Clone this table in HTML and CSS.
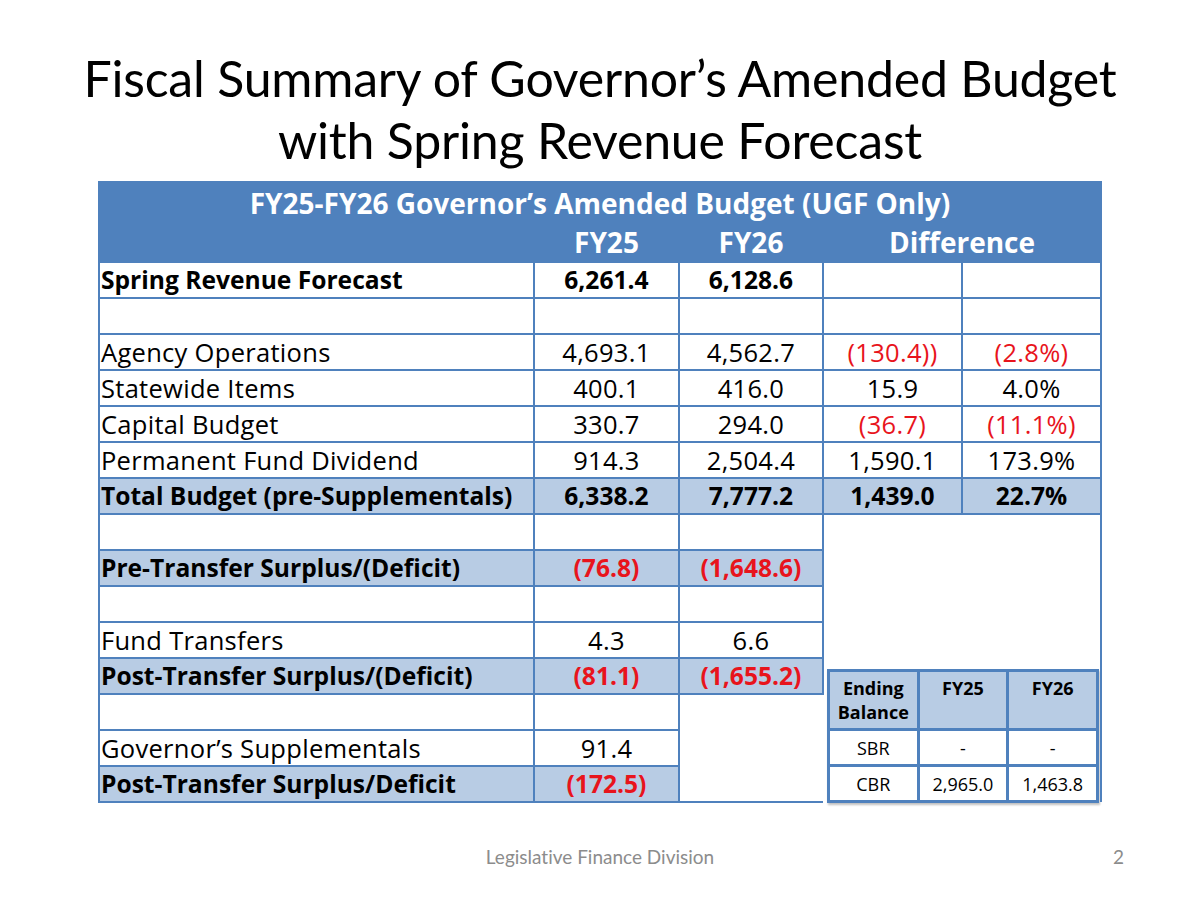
FILE: index.html
```html
<!DOCTYPE html>
<html lang="en">
<head>
<meta charset="utf-8">
<title>Fiscal Summary</title>
<link rel="stylesheet" href="styles.css">
</head>
<body>
<div class="slide">
  <h1 class="title">Fiscal Summary of Governor’s Amended Budget<br>with Spring Revenue Forecast</h1>
  <table class="budget">
    <colgroup>
      <col class="c-label"><col class="c-num"><col class="c-num2"><col class="c-diff"><col class="c-diff">
    </colgroup>
    <thead>
      <tr class="h1row"><th colspan="5">FY25-FY26 Governor’s Amended Budget (UGF Only)</th></tr>
      <tr class="h2row"><th></th><th>FY25</th><th>FY26</th><th colspan="2">Difference</th></tr>
    </thead>
    <tbody>
      <tr class="bold"><td class="lbl">Spring Revenue Forecast</td><td>6,261.4</td><td>6,128.6</td><td></td><td></td></tr>
      <tr><td></td><td></td><td></td><td></td><td></td></tr>
      <tr><td class="lbl">Agency Operations</td><td>4,693.1</td><td>4,562.7</td><td class="neg">(130.4))</td><td class="neg">(2.8%)</td></tr>
      <tr><td class="lbl">Statewide Items</td><td>400.1</td><td>416.0</td><td>15.9</td><td>4.0%</td></tr>
      <tr><td class="lbl">Capital Budget</td><td>330.7</td><td>294.0</td><td class="neg">(36.7)</td><td class="neg">(11.1%)</td></tr>
      <tr><td class="lbl">Permanent Fund Dividend</td><td>914.3</td><td>2,504.4</td><td>1,590.1</td><td>173.9%</td></tr>
      <tr class="bold hl"><td class="lbl">Total Budget (pre-Supplementals)</td><td>6,338.2</td><td>7,777.2</td><td>1,439.0</td><td>22.7%</td></tr>
      <tr>
        <td></td><td></td><td class="rb"></td>
        <td colspan="2" rowspan="8" class="merged">
          <table class="ending">
            <tr class="eh"><th>Ending<br>Balance</th><th>FY25</th><th>FY26</th></tr>
            <tr><td>SBR</td><td>-</td><td>-</td></tr>
            <tr><td>CBR</td><td>2,965.0</td><td>1,463.8</td></tr>
          </table>
        </td>
      </tr>
      <tr class="bold hl"><td class="lbl">Pre-Transfer Surplus/(Deficit)</td><td class="neg">(76.8)</td><td class="neg rb">(1,648.6)</td></tr>
      <tr><td></td><td></td><td class="rb"></td></tr>
      <tr><td class="lbl">Fund Transfers</td><td>4.3</td><td class="rb">6.6</td></tr>
      <tr class="bold hl"><td class="lbl">Post-Transfer Surplus/(Deficit)</td><td class="neg">(81.1)</td><td class="neg rb">(1,655.2)</td></tr>
      <tr><td></td><td></td><td rowspan="3" class="blank"></td></tr>
      <tr><td class="lbl">Governor’s Supplementals</td><td>91.4</td></tr>
      <tr class="bold hl"><td class="lbl">Post-Transfer Surplus/Deficit</td><td class="neg">(172.5)</td></tr>
    </tbody>
  </table>
  <footer class="footer">
    <span></span>
    <span class="src">Legislative Finance Division</span>
    <span class="page">2</span>
  </footer>
</div>
</body>
</html>
```

FILE: styles.css
```css
* { box-sizing: border-box; }
html, body { margin: 0; padding: 0; background: #fff; }
body {
  font-family: Lato, "Open Sans", sans-serif;
  color: #000;
  font-variant-ligatures: none;
}

.slide {
  width: 1200px;
  height: 900px;
  display: flex;
  flex-direction: column;
  align-items: center;
}

.title {
  margin: 47px 0 10px;
  font-weight: 400;
  font-size: 50px;
  line-height: 62px;
  text-align: center;
  color: #000;
  letter-spacing: -0.2px;
}

.budget {
  border-collapse: collapse;
  width: 1002px;
  table-layout: fixed;
  font-family: "Open Sans", Lato, sans-serif;
  font-size: 25.5px;
  letter-spacing: 0.3px;
}
.c-label { width: 435px; }
.c-num { width: 145px; }
.c-num2 { width: 144px; }
.c-diff { width: 139px; }

.budget th {
  background: #4f81bd;
  color: #fff;
  font-weight: 700;
  border: 2px solid #4f81bd;
  padding: 0;
  white-space: nowrap;
}
.h1row th { height: 40px; font-size: 28px; vertical-align: bottom; padding-bottom: 0; letter-spacing: 0; line-height: 36px; }
.h2row th { height: 40px; font-size: 28px; vertical-align: middle; letter-spacing: 0; line-height: 36px; }

.budget > tbody > tr { height: 36px; }
.budget > tbody > tr > td {
  border: 2px solid #4f81bd;
  padding: 0;
  text-align: center;
  vertical-align: middle;
  line-height: 30px;
  white-space: nowrap;
}
.budget > tbody > tr > td.lbl { text-align: left; padding-left: 1px; }
.bold > td { font-weight: 700; letter-spacing: 0; font-size: 24.6px; }
.hl > td { background: #b8cce4; }
.neg { color: #e8141c; }

.budget > tbody > tr > td.merged {
  border-left: none;
  border-bottom: none;
  vertical-align: bottom;
  padding: 0 1px 0 3px;
  font-size: 18px;
}
.budget > tbody > tr > td.blank { border-right: none; }

.ending {
  border-collapse: collapse;
  width: 272px;
  table-layout: fixed;
  font-size: 18px;
  letter-spacing: 0;
  margin-bottom: -1px;
  box-shadow: 1px 2px 2px rgba(0, 0, 0, 0.25);
}
.ending th, .ending td {
  border: 3px solid #4f81bd;
  text-align: center;
  padding: 0;
}
.ending .eh th {
  background: #b8cce4;
  font-weight: 700;
  font-size: 18px;
  color: #000;
  height: 59px;
  vertical-align: top;
  line-height: 24px;
  padding-top: 4px;
}
.ending td { height: 36px; vertical-align: middle; line-height: 20px; }

.footer {
  margin-top: auto;
  width: 1200px;
  display: grid;
  grid-template-columns: 1fr auto 1fr;
  align-items: center;
  padding: 0 76px 32px;
  font-size: 19px;
  color: #8c8c8c;
}
.footer .src { text-align: center; }
.footer .page { justify-self: end; }
```
